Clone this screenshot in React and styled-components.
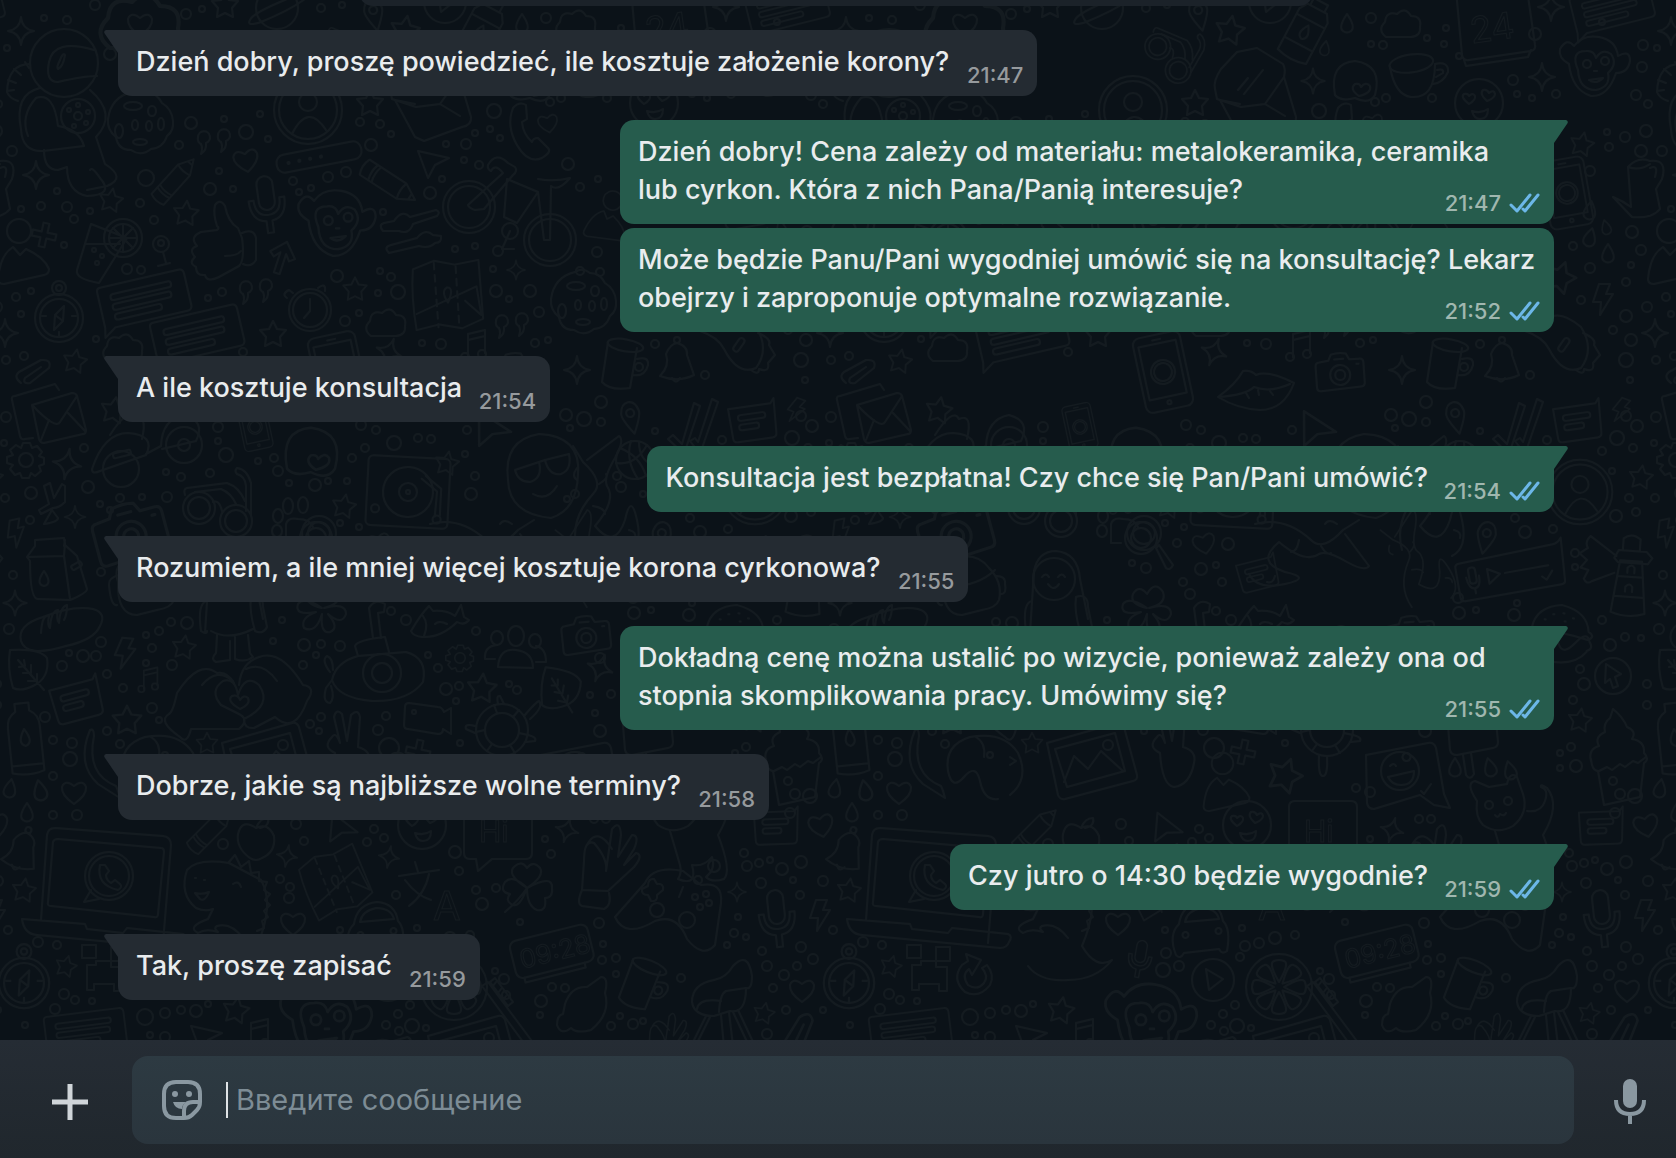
import React from 'react'
import styled, { createGlobalStyle } from 'styled-components';

const GlobalStyle = createGlobalStyle`
  * {
    box-sizing: border-box;
  }
  body {
    margin: 0;
    background: #0b1218;
    font-family: Inter, Roboto, "Liberation Sans", sans-serif;
  }
`

const Page = styled.div`
  display: flex;
  flex-direction: column;
  min-height: 100vh;
`

const Conversation = styled.main`
  position: relative;
  flex: 1;
  display: flex;
  flex-direction: column;
  justify-content: flex-end;
  padding: 0 122px 40px 118px;
  overflow: hidden;
`

const WallpaperSvg = styled.svg`
  position: absolute;
  inset: 0;
  width: 100%;
  height: 100%;
  fill: none;
  stroke: #141b20;
  stroke-width: 2;
  stroke-linecap: round;
  stroke-linejoin: round;

  text {
    stroke-width: 1;
  }
`

const Notice = styled.div`
  align-self: center;
  width: 954px;
  max-width: 100%;
  height: 30px;
  margin-top: -24px;
  border-radius: 14px;
  background: #1b2229;
  z-index: 1;
`

const Bubble = styled.div`
  position: relative;
  align-self: ${(props) => (props.$out ? 'flex-end' : 'flex-start')};
  max-width: 934px;
  margin-top: ${(props) => (props.$tail ? '24px' : '4px')};
  padding: 13px 16px 15px 18px;
  border-radius: 14px;
  border-top-left-radius: ${(props) => (props.$tail && !props.$out ? '0' : '14px')};
  border-top-right-radius: ${(props) => (props.$tail && props.$out ? '0' : '14px')};
  font-weight: 500;
  color: #e9ecee;
  background: ${(props) => (props.$out ? '#265c4d' : '#242b32')};
`

const Tail = styled.svg`
  position: absolute;
  top: 0;
  left: ${(props) => (props.$out ? '100%' : '-14px')};
  width: 14px;
  height: 24px;
  fill: ${(props) => (props.$out ? '#265c4d' : '#242b32')};
`

const Text = styled.span`
  font-size: 27px;
  line-height: 38px;
`

/* keeps room on the last line for the time and ticks */
const MetaSpace = styled.span`
  display: inline-block;
  width: ${(props) => (props.$out ? '110px' : '72px')};
  height: 1px;
`

const Meta = styled.span`
  position: absolute;
  right: 14px;
  bottom: 8px;
  display: flex;
  align-items: center;
  gap: 8px;
  font-size: 22px;
  line-height: 26px;
  color: ${(props) => (props.$out ? '#a0b7af' : '#969a9d')};
`

const TicksSvg = styled.svg`
  width: 31px;
  height: 20px;
  fill: none;
  stroke: #6cb7e8;
  stroke-width: 3;
  stroke-linecap: round;
  stroke-linejoin: round;
`

const Composer = styled.form`
  display: flex;
  align-items: center;
  padding: 16px 30px 14px 52px;
  background: linear-gradient(#252c34, #20272d);
  z-index: 1;
`

const IconButton = styled.button`
  display: flex;
  padding: 0;
  border: 0;
  background: none;
  color: ${(props) => (props.$light ? '#d0d5d9' : '#8a98a1')};
`

const SideButton = styled(IconButton)`
  padding-top: 4px;
`

const Field = styled.div`
  flex: 1;
  display: flex;
  align-items: center;
  height: 88px;
  margin: 0 40px 0 44px;
  padding: 0 30px;
  border-radius: 16px;
  background: linear-gradient(#2d3a42, #2a353d);
`

const Caret = styled.span`
  width: 2px;
  height: 36px;
  margin: 0 8px 0 24px;
  background: #dfe3e6;
`

const Input = styled.input`
  flex: 1;
  min-width: 0;
  padding: 0;
  border: 0;
  outline: 0;
  background: none;
  color: #e9ecee;
  font-family: inherit;
  font-size: 29px;
  line-height: 38px;

  &::placeholder {
    color: #7d8c95;
    opacity: 1;
  }
`

/* every doodle is drawn round its own centre */
const doodles = {
  star: <path d="M0-13l4 8 9 1-6 7 1 9-8-4-8 4 1-9-6-7 9-1z" />,
  sparkle: <path d="M0-14q1 12 13 14q-12 2-13 14q-1-12-13-14q12-2 13-14z" />,
  heart: <path d="M0 12Q-13 3-12-5Q-9-13 0-6Q9-13 12-5Q13 3 0 12z" />,
  drop: <path d="M0-9Q9 4 4 8Q0 11-4 8Q-9 4 0-9z" />,
  bolt: <path d="M-4-15H7L3-5h7L-3 16l1-13h-8z" />,
  cloud: <path d="M-15 13Q-24 6-16-2Q-15-13-4-10Q4-18 10-8Q21-8 19 3Q20 12 10 13z" />,
  plus: <path d="M-3-12h6v9h9v6H3v9h-6V3h-9v-6h9z" />,
  arrow: <path d="M-15-12L16-5 2 2-5 15z" />,
  up: <path d="M0-16L13-2 8 2 3-4V17h-6V-4l-5 6-5-4z" />,
  pin: <g><path d="M0 17Q-10 0-9-5Q-7-15 0-15Q7-15 9-5Q10 0 0 17z" /><circle cy="-4" r="4" /></g>,
  quotes: <path d="M-16-6a6 6 0 1 1 8 6q1 7-5 11q2-6 0-10q-4-2-3-7zM4-8a6 6 0 1 1 8 6q1 7-5 11q2-6 0-10q-4-2-3-7z" />,
  pencil: <g><path d="M-29-9H15L31 0 15 9h-44q-4-9 0-18zM15-9q-3 9 0 18M-19-9q-3 9 0 18M-15-9q-3 9 0 18M25-3v6" /></g>,
  mic: <g><rect x="-8" y="-27" width="16" height="34" rx="8" /><path d="M-18-4q0 20 15 22v12h6V18q15-2 15-22h-5q0 16-13 16T-13-4z" /></g>,
  bar: <g><rect x="-43" y="-9" width="86" height="18" rx="8" /><circle cx="-31" r="1" /><circle cx="-20" r="1" /><circle cx="-9" r="1" /><circle cx="2" r="1" /></g>,
  note: <g><path d="M-9 10V-13l17-4V6M-9-7L8-11" /><circle cx="-12" cy="10" r="4" /><circle cx="5" cy="7" r="4" /></g>,
  bubble: <g><path d="M-45-18q0-4 4-4h80q5 0 5 5v32q0 5-5 5h-74l-12 8 2-10z" /><rect x="-33" y="-13" width="62" height="6" rx="3" /><rect x="-33" y="-3" width="60" height="6" rx="3" /><rect x="-33" y="7" width="48" height="6" rx="3" /></g>,
  memo: <g><path d="M-24-18h45l4-5-2 36q0 5-5 5h-36q-5 0-5-5z" /><rect x="-15" y="-10" width="29" height="6" rx="3" /><rect x="-15" y="0" width="21" height="6" rx="3" /></g>,
  avatar: <g><circle r="34" /><circle r="29" /><circle cy="-8" r="9" /><path d="M-16 24Q0-8 18 20" /></g>,
  person: <g><circle cx="-5" cy="-24" r="12" /><path d="M-26 24Q-24 0-11-8l7 8 6-6Q20 2 25 14q0 5-5 6l-40 9q-6 0-6-5z" /></g>,
  compass: <g><circle r="24" /><circle r="19" /><circle cy="-30" r="7" /><circle cy="-30" r="3" /><path d="M5-12L4 3-5 12-4-3zM-4-3l8 6M-17-2h4M17-2h-4M0 18v-4" /></g>,
  clock: <g><circle r="21" /><circle r="17" /><path d="M0-11v12l-6 7M-23-12q-6-4 2-8l4 3M8-22q8-6 7 3" /></g>,
  map: <g><path d="M-37-27l22-9 22 4 25-5 5 62-22 10-24-4-24 6q-6-35-4-64zM-33 20L30-9l5 30-17-15" /><path strokeDasharray="7 6" d="M-15-34l5 68M8-30l4 64" /><path d="M0 8q-8-12-1-16q8 0 1 16z" /></g>,
  envelope: <g><path d="M-45-14q-4 0-3 4l8 36q1 4 5 3l8-1M-45-14l40-12 4 6" /><path d="M-28-5l40-12q4 0 5 3l9 34q0 4-3 4l-39 9q-4 0-5-4zM-28-5Q-4 20 0 12L17-14M-19 30L-11 10M25 21L8 3" /></g>,
  letter: <g><path d="M-40-5q-2-8 6-20L-18-42 2-46l26 16q3 5 1 13L10 10-14 13-38 5zM29-17l12 40q1 8-9 10l-38 14-9-4-20-37 20 4M10 10l20 12" /><path d="M-17-4L-7-16M-11 0L8-24" /></g>,
  planet: <g><circle r="21" /><path d="M-16 14q-15 5-11-2q2-6 30-18t29-13q7 2-7 12T-16 14z" /></g>,
  flask: <g><path d="M-11-24h22l5 8v46q-16 5-32 0v-46zM-16-10h32M-16 16h32M-8-24v-8H8v8" /><path d="M0-5q8 12 0 15q-8-3 0-15z" /></g>,
  bottle: <g><path d="M-7-35H7v8q9 5 9 16v45q-16 5-32 0v-45q0-11 9-16zM-16 27h32" /><path d="M0-9q9 14 0 17q-9-3 0-17z" /></g>,
  astronaut: (
    <g>
      <circle cx="0" cy="-61" r="34" />
      <path d="M30-74Q-10-86-15-62Q-19-42-6-42Q20-48 33-48M-4-64q-4 8-2 9q5-2 7-14q-2-3-5 5zM-34-60q-22 0-23 28q2 6 11 9M-50-34l-7 1M-48-41l-8-3M-43-49l-7-6M-35-56l-4-6" />
      <path d="M-24-36Q-50-30-43 5Q-42 28-21 27L20 22Q15 5-6 2Q-10-32-28-26Q-44-8-36 12M26-34Q54-10 32 13l9 27q22 14 2 22l-20 4M-20 26q0 20 14 20l9-3q0 25 20 29q28-1 13-18q-8-12-10-8" />
      <circle cx="14" cy="-8" r="17" /><circle cx="14" cy="-8" r="4" /><circle cx="5" cy="-14" r="2" /><circle cx="14" cy="-19" r="2" /><circle cx="24" cy="-12" r="2" /><circle cx="22" cy="-1" r="2" /><circle cx="10" cy="2" r="2" />
    </g>
  ),
  cookie: <g><path d="M-8-31q8-5 15 1q10 0 15 10q10 6 11 18q1 10-6 15q-4 12-16 13q-10 8-20 1q-13 0-15-13q-9-7-8-18q3-22 24-27z" /><ellipse cx="-7" cy="-17" rx="9" ry="4" /><ellipse cx="12" cy="-12" rx="4" ry="5" /><ellipse cx="-5" cy="2" rx="3" ry="5" /><ellipse cx="9" cy="3" rx="3" ry="5" /><ellipse cx="21" cy="1" rx="3" ry="6" /><ellipse cx="-21" cy="8" rx="4" ry="7" /><ellipse cy="19" rx="7" ry="3" /></g>,
  phone: <path d="M-17-23q-7 18 4 37t25 13q10-6 6-10L8 7Q3 7 2 11Q-7 3-8-9l5-3-1-14q-7-4-13 3z" />,
  bike: <g><circle cx="-41" cy="-16" r="26" /><circle cx="-41" cy="-16" r="21" /><circle cx="40" cy="17" r="26" /><circle cx="40" cy="17" r="21" /><path d="M-42-18L-7-50q-8-10-12-2q-4-2-3-6q8-14 20-2l7 4q3 4-2 8l-29 34-9 1q-6-2-7-5zM-3-44L28-31 7 0-6-6zM28-44q16 3 32-1q-12 14-19 8L40 17h-6L28-31" /><circle cy="8" r="8" /><path d="M0 8l-8 18h12" /></g>,
  monkey: <g><path d="M-25-4q-11-6-9-15q7-12 14-3Q-11-34 5-31Q22-28 24-12q12-7 12 5q-2 12-14 12Q14 29-3 28Q-22 22-25-4z" /><path d="M-16 2Q-24-17-8-17Q0-18 2-10Q8-20 17-14Q24-4 14 5Q17 19 2 22Q-15 22-16 2z" /><circle cx="-7" cy="-4" r="4" /><circle cx="11" cy="-7" r="4" /><path d="M0 3h3M-5 12q7 5 14-2z" /></g>,
  spoons: <path d="M-28-6q-5-6 1-8l10-2q8-12 16-4l26-7q5 2 1 6L2-13Q-2-2-12-6zM-22 16q-6-6 2-8L6 1q8-10 16-3l8 1q1 7-6 7Q18 12 8 9z" />,
  thumb: <path d="M-6-19q-4-12-2-21q5-7 10 1q3 16 13 22l4 10q3 22-3 28L-4 32q-12 6-14-2q-9 1-9-8q-8-4-1-10q-7-8 2-11q-8-9 4-14l16-2q3-2 0-4zM19-12q12-5 14 5v22q-5 8-13 4M2 11q12 0 16-5" />,
  drink: <g><circle cx="24" cy="-12" r="19" /><circle cx="24" cy="-12" r="14" /><path d="M24-26v28M10-12h28M14-22l20 20M34-22L14-2M-8-26l36 14L0 33q-24-4-22-13zM-13-6h34" /><circle cx="-5" cy="0" r="2" /><circle cx="3" cy="6" r="2" /><circle cx="-2" cy="13" r="2" /></g>,
  clip: <path d="M-13 10q-8-6-2-11L7-13q11-1 8 8L-4 10q-8 1-5-5L7-6" />,
  smart: <g><rect x="-24" y="-38" width="48" height="76" rx="7" /><path d="M-19-29h38v54h-38zM-4-33h8" /><circle r="12" /><circle r="9" /><circle cy="31" r="2" /></g>,
  lips: <path d="M-38 9Q-20-4-13-17Q-5-18 0-13Q12-18 38-5Q28 22 4 22Q-18 21-38 9q28-2 36-10q16 6 36-3M-10 5l3 5M2 2l1 5M14 3l3 4" />,
  camera: <g><path d="M-20-11l9-1 3-6q8-2 15 0l3 6h10q4 0 4 4v20q0 4-4 4l-40 2q-4 0-4-4v-21q0-4 4-4z" /><circle cy="3" r="10" /><circle cy="3" r="5" /><path d="M-5-13h9M17-7h2" /></g>,
  calendar: <g><path d="M-40-40l6 65q1 6 7 5l62-9q5-1 4-6l-9-63M-32 30l2 6 62-9 3-7" /><text x="-26" y="10" fontSize="36" transform="rotate(-8)">24</text></g>,
  cup: <g><ellipse cx="-2" cy="-12" rx="22" ry="9" transform="rotate(-8)" /><path d="M-25-8Q-20 20-4 22q24 2 24-33q14-3 13 8q-5 11-15 12M22-5q7-2 6 3l-7 4" /></g>,
  donut: <g><path d="M-20 13Q-26-19 0-21Q28-17 20 13q-6 10-20 3q-14 4-20-3z" /><path d="M4 14q-10-7-4-12q5-1 6 3q5-6 9-1q2 7-11 10z" /></g>,
  smile: <g><circle r="24" /><path d="M-10 1q-9-7-5-10q4-1 5 2q4-4 6 0q1 4-6 8zM8-2q-8-7-4-11q4-1 6 3q5-4 6 1q0 4-8 7zM-7 8q9 3 16-2q0 10-8 10q-6 0-8-8z" /></g>,
  jug: <path d="M-24 10Q-14 14-6 20l-3-40q10-11 22-6q18-2 12 18L19 2l4 20q-8 10-28 8zM-9-20q12 4 22-3M13-19q9-4 5 9" />,
  rocket: <g><path d="M-40-14Q-22-8-16 4Q-2 31 16 23Q30 4 16-18Q-5-36-18-26M18-12q14 6 11 12l6 10-7 8q2 10-9 6q0 7-8 1" /><rect x="-4" y="-7" width="6" height="15" rx="3" transform="rotate(35)" /></g>,
  mug: <g><ellipse cx="0" cy="-20" rx="18" ry="6" transform="rotate(10)" /><path d="M-14-23l-6 40q8 9 28 6l7-40M15-6q12-3 11 6q-3 12-15 10" /><circle cx="17" cy="2" r="4" /></g>,
  bell: <g><path d="M-17 12q10-10 6-22q4-10 11-11q11 3 10 12l7 20q-16 8-34 1z" /><path d="M-5 14q4 7 8 0" /><circle cy="-24" r="3" /></g>,
  gear: <g><path d="M-3-17h7l2 5 5-2 5 6-3 4 5 2v6l-5 2 2 5-6 5-4-3-2 5h-7l-2-5-5 2-5-6 3-4-6-2v-6l6-2-3-5 6-5 5 3z" /><circle r="7" /></g>,
  scooter: <g><path d="M-56 22Q-44-14-20-14Q8-12-2 8L-48 24q-8 4-8-2zM-38-12Q-20-40-14-28Q0-34-6-8M-2 7l15-8Q14-28 36-32Q58-26 48-6l-34 8" /><circle cx="-27" cy="22" r="18" /><circle cx="36" cy="-2" r="18" /><circle cx="36" cy="-2" r="6" /><rect x="-36" y="-2" width="18" height="5" rx="2" transform="rotate(-14)" /></g>,
  turntable: <g><rect x="-41" y="-35" width="82" height="70" rx="5" /><circle r="25" /><circle r="9" /><circle r="2" /><path d="M13-14l16 12-1 25M17-17l16 12v27" /><circle cx="30" cy="26" r="4" /><circle cx="-32" cy="18" r="4" /></g>,
  glasses: <g><circle cx="-22" cy="15" r="16" /><circle cx="-22" cy="15" r="11" /><circle cx="15" cy="28" r="16" /><circle cx="15" cy="28" r="11" /><path d="M-8 9q6-3 9 9M-36 2q-2-6 2-7l40-5q12 4 18 18M-26-1l26-3q10 4 15 15M30 22V-10Q26-24 16-25q-3 3 0 6q8 2 9 12v25" /></g>,
  paw: <g><ellipse cx="-8" cy="-22" rx="5" ry="8" /><ellipse cx="7" cy="-23" rx="5" ry="8" /><ellipse cx="-18" cy="-12" rx="5" ry="7" /><ellipse cx="-19" cy="3" rx="5" ry="6" /><path d="M-10 15V-4q2-7 12-5q12 0 15 8M-10 15h10" /><circle cx="20" cy="10" r="16" /><circle cx="20" cy="10" r="10" /></g>,
  carton: <g><path d="M-22-30l29-2 1 7 12 11 10 33q0 4-17 11l-32-1q-8 0-8-38l-3-4 8-11zM-30-13L7-14 8-27M7-14l6 43M8-30l-1 6" /><path d="M-13 1q9 13 0 15q-9-2 0-15z" /><rect x="14" y="-6" width="11" height="5" rx="2" transform="rotate(-30 18 -4)" /></g>,
  bread: <path d="M-40 14q-4-16 22-24q30-12 50-8q14 4 7 17q-6 14-34 20q-40 12-45-5zM-20 6q1-19 8-17q-2 9 1 12q1-17 8-18q-2 9 1 13q1-16 8-18q0 10-3 15" />,
  pack: <g><path d="M-25 2q-6-18 12-24q22-6 34 10q14 14 10 32q-3 8-17 10l-20 5q-20 0-19-33zM-24-5q-11 3-10 10q2 22 8 20M28-4q10 0 9 8q2 10-4 10" /><path d="M-24 6Q8 8 27-10" /></g>,
  leaf: <path d="M-18-20q30-2 37 8q3 20-14 28q-12 6-20 2q-6-20-3-38zM-10-10L16 20M-3-4l-1-6M-3-4l-6 1M3 3v-8M3 3h-8M9 11v-7M9 11H0" />,
  hands: <path d="M-5-14Q-12-26-22-24Q-40-38-62-4Q-66 15-70 17Q-82 24-59 40Q-52 48-48 32L0 32Q12 22-2 16L-18 8Q-30-6-16-16Q-4-20-1-2Q6-24 20-12Q34 8 5 22q0 10 10 9L36 20q20 18 32-16q10-14-4-16Q42-48 20-40Q2-34 0-12M-37-12Q-22-30-6-16M7-28Q24-36 38-16M1 12q-14-8-8-13q6-2 8 4q4-6 8-2q3 6-8 11z" />,
  flower: <path d="M0 0Q-18-4-14-14Q-8-24 0-14Q8-28 16-16Q20-4 2 0Q24-6 24 6Q20 18 6 6Q18 20 8 24Q-2 26 0 6Q-6 26-18 20Q-22 10-6 4Q-28 8-24-4Q-18-12 0 0z" />,
  sub: <g><path d="M-46 8Q-42-10-20-16L28-20Q50-14 45 10Q30 30-6 29Q-40 26-46 8zM-20-16l-3-10q2-6 30-9l4 15M-5-34l-4-30q6-10 16-4l-1 8-6 1 3 25M-46 8l-6 8q-4 14 4 15q5-5 1-17M-48 0q-9-12-3-16q6 2 6 14" /><circle cx="4" cy="1" r="19" /><circle cx="4" cy="1" r="10" /></g>,
  fish: <path d="M-30 9Q-20-8-12-16L-8-11Q6-12 14-6l6-11 3 12 5 3q-5 6-12 2Q0 16-19 15Q-28 14-30 9zM-18-6q6 8 1 20M-6 2q4-4 12 0" />,
  people: <g><ellipse cy="-14" rx="8" ry="10" /><ellipse cx="-19" cy="-12" rx="6" ry="7" /><ellipse cx="19" cy="-9" rx="6" ry="7" /><path d="M-18 17Q-17-2 0 0Q17 2 17 18zM-21 9h-10q-1-13 12-14M20 12h10q0-14-10-16" /></g>,
  video: <g><path d="M-20-14q-4 0-4 4l-1 18q0 4 4 4l30 5q5 0 5-5l8 5V-9l-7 4q-2-5-6-5z" /><circle cx="-15" cy="-5" r="2" /></g>,
  turtle: <g><circle r="26" /><circle r="17" /><path d="M-5-17l-3-8M11-13l6-7M17 3l9 2M8 15l5 8M-10 14l-5 7M-17 0l-9 2M22-14q12-14 15-15q5 6-9 18M-27-4q-11-3-9 3l9 4M26 5q9 2 7 6l-9 1M-4-26q-2-9 2-8l4 8M-8 26q-1 20 4 20t4-20" /></g>,
  peace: <path d="M-13 8Q-26 2-16-8Q-12-14-8-2L-14-28q2-9 8-3L-1-4 3-30q7-7 9 2L10 2q14 4 11 16q-4 22-20 24q-12-2-14-34z" />,
  picture: <g><path d="M-42-14L28-34q5-1 7 4L48 18q1 5-4 6L-24 42q-5 1-7-4z" /><path d="M-34-8l60-16 10 38-58 16zM-25 25l10-26 14 13L12-6l22 20" /><circle cx="19" cy="-12" r="5" /></g>,
  moon: <path d="M-6-30q-14 34 8 54l22 14q-2-8-4-12Q-10 14-2-24q0-8-4-6z" />,
  dog: <g><path d="M-34 14Q-38-12-12-20Q22-26 36-4Q48 22 28 38M-34 14q4 20 16 6t16 4q4 20 18 18" /><circle cx="8" cy="-2" r="3" /><path d="M28 0l6 4-6 4M-6-20q10 6 8 20" /></g>,
  helmet: <g><path d="M-35 10Q-40-30-4-36Q38-34 35 4Q34 40 8 48Q-34 44-35 10z" /><path d="M-28 0l24-8q4 16-9 20q-12 0-15-12zM2-10L26-16q3 16-8 20q-12 2-16-14M-4-8l6-2M-10 24q14 8 24-8" /></g>,
  check: <path d="M-26 12l5-4 9 9L0-24l6 3L-10 27zM-4 14l5-3 3 4L18-28l6 3L6 27z" />,
  ball: <g><circle r="19" /><path d="M-15-12Q5-4 11 16M-19 3Q0 6 12-15M-4-19Q-10 0 3 19M4-18Q4 0 18 5" /></g>,
  snake: <path d="M-26 60Q-34 30-10 4Q2-8-20-28L-30-44M-16-30L16-54q6 4-4 22Q0-12 4-4Q14 10-8 36Q12 60 22 30Q28 2 34 30Q40 58 24 66M-4-6q10-6 7-10M-10 16q12 2 12 8M-26-22q-6 8 0 12M26 40q8 2 6 8" />,
  kid: <g><path d="M-24 46L-20-16Q-16-36 2-36Q24-34 26-8l8 40M-22 14q-10 2-6 30q6 4 6 0M22 10q12-4 12 10l4 20q-4 8-12 4q-6-20-4-34M-18 44Q0 54 24 42M-12 48l-1 18q-6 6 0 9l14-2V54M6 50v22q10 4 18-2l-3-4-2-18" /><circle cy="-8" r="21" /><path d="M-12-10q4-5 7 0M4-10q4-5 7 0M-6-3q6 8 11 0" /></g>,
  voice: <g><path d="M-53-14q0-4 4-4l96-3q5 0 9-5l-3 42q0 4-4 4h-98q-4 0-4-4z" /><rect x="-41" y="-12" width="7" height="16" rx="3" /><path d="M-44-3q1 12 7 12t6-12M-37 9v5M-22-8l12 7-12 8zM-5-1h44M31 9l4 4 7-8" /></g>,
  lighthouse: <g><path d="M-18 36L-12-16h22L16 36q-18 6-34 0zM-18-18l4-8h28l6 6-4 6h-30zM-10-26v-12q8-7 17 0v12M-14 0h26M-16 20h30M-16-20L-43-38q-6 6-2 12l-8 6 8 6-6 8 8 2-4 9q3 6 8 2l22-10" /><path d="M-4-4v-5q4-5 7 0v5M-5 15v-5q4-5 7 0v5" /></g>,
  burger: <path d="M-28 4Q-26-18 0-22Q26-18 29 2q8 4 0 8Q0 3-28 8zM-28 12q4 8 14 2t15 4 16-4 14-2q5 6-2 9M-26 20Q-26 32-10 35Q18 38 29 22M-16-6h1M-8-12h1M2-14h1M4-6h1M12-10h1" />,
  cursor: <g><circle r="18" /><path d="M-7-12L8-2 2 1l3 9-5 2-3-9-5 4z" /></g>,
  cupcake: <path d="M-28 14q-3-12 8-15q-5-9 6-14q-2-9 5-14L-6-38Q4-30 8-20q10 4 5 12q13 2 12 14q6 6 0 10l-4 34-36 8-6-34q-6 0-7-12zM-20 24l8-4 5 3 8-6 5 3 8-6 5 2 8-6" />,
  popsicle: <path d="M-25-34L16-40q6 0 7 5l4 42q0 5-5 6l-36 7q-6 0-7-5zM-8 20l3 20q4 6 8-1L0 18M-18-14q10 6 18-4t20 0" />,
  face: <g><path d="M-38-30L24-42q6-1 8 5l8 46 6 14-16-3-14-10-46 14q-6 0-7-6z" /><circle cx="-4" cy="-14" r="19" /><path d="M-14-19q4-4 6 0M2-24a4 4 0 1 1 1 0M-16-8L10-14Q10 0-3 0Q-12 0-16-8M17 6l3 3 7-10" /></g>,
  lens: <g><circle cx="-5" cy="-9" r="17" /><circle cx="-5" cy="-9" r="11" /><path d="M7 6l3-3 14 20q-3 6-7 3z" /></g>,
  laptop: <g><path d="M-60-62L48-54q8 1 8 9l-8 98M-60-62q-7 0-8 7l-6 85M-57-51L46-42q3 0 3 4l-6 62q0 4-4 3L-64 16q-4 0-3-4l5-60q1-3 5-3zM-93 29L-30 34l2 5 36 4 4-5 56 6q5 2 1 8q-2 6-9 6L-78 45q-13-1-15-16z" /><circle cx="-6" cy="-14" r="24" /><circle cx="-6" cy="-14" r="20" /><path d="M-24 0l-7 12 15-3M-15-25q-4 20 18 25q5-3 2-6l-5-4-4 3q-5-3-5-8l3-4-4-6z" /></g>,
  apple: <path d="M0-10Q-14-20-18-4Q-20 10-6 20Q0 24 6 20Q20 14 18-2Q12-16 0-10zM0-10Q4-20 12-20Q14-12 4-10" />,
  dino: <g><path d="M18 38q-12-16-26-12q-4 2 1 6q-12-4-20 1q-12-6 10-14l5-10q-8 3-17-1Q-46-6-38-30Q-28-42 4-37L36-20Q50 4 32 46q14 24 30 14q-16 20-44 20Q-10 82-22 66" /><path d="M4-38l6-7 6 12 8-6 2 12 8-1 0 9 8 1-3 8 6 4-5 6 5 5-6 6 4 6-6 4 2 7-7 3M-30-22h1M-21-20h1M8-16q6-4 8 3M-30-7q7 2 14-1q-4 10-9 7z" /></g>,
  hi: <g><path d="M-28-37h56q6 0 6 6v46q0 6-6 6H-6l-14 12-2-12h-6q-6 0-6-6v-46q0-6 6-6z" /><text x="-19" y="4" fontSize="30">Hi</text></g>,
  clover: <path d="M0 0Q-22-14-12-22Q-5-28 0-20Q6-28 13-20Q18-12 0 0Q26-14 25 0Q26 10 18 10Q20 24 10 22Q0 18 0 0Q-8 22-16 16Q-22 12-17 6Q-28 4-22-6Q-14-14 0 0Q-8 12-22 24" />,
  lang: <g><path d="M-26-12L14-18M-10-26l3 10M4-14Q0 6-16 18M-20-8Q-8 8 6 12" /><text x="8" y="32" fontSize="40">A</text></g>,
  car: <path d="M-23-6Q-20-26 0-28Q18-27 21-9q8 8 4 30q-5 4-8-2l-35 4q-4 7-8 2q-8-20 3-31zM-17-8L17-11Q14-22-1-22Q-15-19-17-8zM-16 2a3 3 0 1 1-1 0M17-2a3 3 0 1 1-1 0" />,
  creeper: <path d="M-16-22h14v13h-14zM13-20h14v14H13zM-2-6h15v6h11v24h-8v-7H-4v6h-7V-2h9z" />,
  redo: <path d="M-13-12Q-24 2-10 15Q4 22 15 8Q20-2 12-12l-5 3q7 8 2 15Q2 14-7 8Q-14-2-6-8l3 6L6-17-9-23l2 7z" />,
  play: <g><circle r="21" /><path d="M-7-11L10-1-4 10z" /></g>,
  lime: <g><circle r="33" />{[0, 45, 90, 135, 180, 225, 270, 315].map((a) => <path key={a} transform={`rotate(${a})`} d="M0-5Q-11-24-5-26Q0-28 5-26Q11-24 0-5z" />)}</g>,
  digital: <g><rect x="-41" y="-20" width="80" height="38" rx="7" /><path d="M-34 18v5h62v-5" /><text x="-34" y="9" fontSize="26">09:28</text></g>,
  brush: <path d="M-36-34l6-4L28 40l-6 5zM-28-38l5-4 18 24-5 4zM-22-38l-3 4M-17-31l-3 4M-12-24l-3 4" />,
  kettle: <path d="M-18-4Q-12-22 4-21l14-10q8 0 4 16Q28 6 8 22Q-6 26-12 20q-10 8-14-3q0-10 6-11z" />,
  gamepad: <g><path d="M-26-32Q-18-50 12-44l18 14q22-4 20 18L44 30q-12 14-28-6Q6-2-16 6Q-46 24-56 2zM-23-29q0-8 6-7l3 5q7-1 6 6l-6 5q1 7-6 6l-3-6q-7 0-6-6z" /><circle cx="-14" cy="-5" r="7" /><circle cx="16" cy="5" r="8" /><circle cx="24" cy="-18" r="3" /><circle cx="35" cy="-21" r="3" /><circle cx="29" cy="-8" r="3" /><circle cx="38" cy="-12" r="3" /><path d="M8-18l4-10" /></g>,
  chair: <path d="M-32 2Q-32-16-10-20Q2-22 9-34Q24-50 28-24Q28-10 22-12Q22 14 6 11L-10 16Q-30 16-32 2zM22-12L2-9Q-4-6-5 12M-27 9q2-11 24-8M-18 16l-14 28M-14 17l-14 28M-3 15l3 32M5 12l4 34M14 10l16 34M9 12l16 34" />,
  tulip: <path d="M-22-2Q-22-24-12-20Q2-4 0 8L6-34q8-10 9 6L12-6 26-28q8 0 2 14L18 2l12-12q8 2-2 14L2 28-24 27zM-24 27q-6 14 0 16l22 3q8-4 5-16M-18-20Q-8-36 6-14" />,
  cat: <g><path d="M-24-12q-12-18-2-20l14 6 18-3q3-13 10-7l6 17Q28 0 12 13Q-4 22-18 12q-8-8-6-24zM26-2q14 2 18-10t-4-14q-1-4 6 1Q60-8 42 22q14 36 6 44q-12 4-18-2q10-8 6-20q-8 10-20 8q6 22-14 14q4-6 2-14L-6 18" /><circle cx="-12" cy="-8" r="4" /><circle cx="7" cy="-12" r="4" /><path d="M-6 2q3 4 5-1q4 3 6-1" /></g>,
  bulb: <g><circle cy="-6" r="8" /><circle cy="-7" r="3" /><path d="M2 2l3 11M-3 16l12-3" /></g>,
  pinwheel: <path d="M-8-16l6-3 4 15 8-14 3 2v16q-6 6-12 6l-12 6-2-4 10-6zM-8 22l8-14 6 8q0 4-14 6z" />,
}

// tile of the wallpaper: [doodle, x, y, rotation, scale]
const placed = [
  ['sparkle', 21, 31], ['cloud', 140, 22, 0, 2], ['heart', 140, 24], ['star', 225, 5], ['planet', 277, 8], ['pin', 374, 14, -12], ['play', 445, 2],
  ['flask', 481, 30, 28], ['drop', 522, 23], ['star', 405, 30, 10, 1.1], ['glasses', 354, 45, 30, 0.8], ['cloud', 576, 24], ['calendar', 671, 30], ['sparkle', 726, 7], ['bubble', 788, 8, -14, 0.9],
  ['astronaut', 64, 124], ['cookie', 140, 123], ['avatar', 308, 110], ['star', 370, 103], ['letter', 430, 94], ['sparkle', 488, 81, 0, 0.9], ['donut', 530, 82], ['cup', 590, 75],
  ['drop', 500, 48, 10, 0.8], ['sparkle', 717, 77], ['smile', 654, 103], ['monkey', 769, 68], ['phone', 530, 131], ['heart', 548, 123, -10, 0.8], ['quotes', 214, 143], ['pencil', 175, 180, -48, 0.9],
  ['heart', 246, 160, -10], ['bar', 319, 157, -11], ['pencil', 389, 183, 33, 1], ['arrow', 433, 163], ['bike', 510, 223], ['sparkle', 36, 175], ['star', 111, 200, 10, 0.9], ['star', 186, 213, 5, 0.95],
  ['mic', 267, 203, -8], ['monkey', 336, 225, 0, 1.1], ['spoons', 411, 237], ['thumb', 223, 245], ['up', 282, 257, 18], ['drink', 99, 250], ['person', 24, 255], ['plus', 44, 235, 12], ['bulb', 161, 250],
  ['compass', 59, 318], ['bubble', 145, 300, -13], ['bubble', 198, 335, -13], ['star', 273, 334], ['clock', 310, 310], ['quotes', 256, 293], ['star', 355, 289, 0, 0.9], ['cloud', 386, 323],
  ['map', 448, 295, 0, 0.95], ['sparkle', 516, 270, 0, 0.7], ['quotes', 512, 327], ['sparkle', 5, 333], ['cloud', 123, 348], ['star', 75, 361, 10, 0.9], ['clip', 34, 373], ['note', 477, 347], ['sparkle', 389, 352, 20],
  ['star', 757, 144, 12, 0.9], ['jug', 812, 187], ['smart', 742, 193, -10, 0.9], ['drop', 765, 210, 10], ['drop', 781, 227, -15, 0.8], ['drop', 765, 237, 15], ['drop', 783, 253], ['star', 735, 277, 20, 1.2],
  ['bolt', 778, 299], ['rocket', 740, 345], ['person', 610, 220, 20, 0.8], ['cookie', 583, 303], ['mug', 622, 365], ['bell', 677, 364],
  ['smart', 338, 372, -12], ['lips', 431, 388], ['camera', 515, 372, -4], ['sparkle', 577, 370], ['envelope', 60, 410], ['star', 114, 410, 10], ['gear', 26, 460], ['sparkle', 67, 464, 10, 1.1],
  ['scooter', 148, 447], ['smart', 255, 427, -12, 0.6], ['donut', 311, 453, 0, 1.2], ['turntable', 408, 492, 3], ['star', 447, 463, 10, 0.9], ['glasses', 221, 493], ['paw', 296, 528], ['star', 344, 506, 10, 0.9],
  ['helmet', 543, 470], ['arrow', 491, 431, 20, 1.2], ['pinwheel', 52, 502], ['sparkle', 75, 517, 0, 0.8], ['bolt', 16, 533, -12, 0.9], ['camera', 130, 532, -15, 1.5], ['carton', 57, 570], ['sparkle', 15, 603, 0, 0.9],
  ['pin', 631, 417, -12], ['check', 694, 427], ['memo', 753, 423, -8, 0.95], ['bolt', 796, 410, 20, 0.8], ['ball', 635, 460], ['snake', 603, 490], ['avatar', 755, 492, 0, 0.95], ['star', 816, 477, 8, 0.9],
  ['pin', 661, 537, 12], ['lens', 324, 542], ['heart', 379, 543, -12, 0.9], ['memo', 433, 575, -14, 0.8], ['voice', 685, 573, -10], ['lighthouse', 806, 577, 4], ['snake', 490, 550, 90], ['snake', 590, 555, -20, 0.8],
  ['bread', 61, 627], ['pack', 143, 580], ['kid', 229, 587], ['flower', 322, 608], ['fish', 441, 622], ['camera', 586, 635, -6], ['burger', 735, 627, 6], ['leaf', 28, 670], ['memo', 77, 702, -15, 1],
  ['bolt', 125, 653, 5], ['star', 184, 647, 8, 0.9], ['note', 151, 681, 0, 0.8], ['hands', 239, 697], ['sub', 378, 672], ['gear', 460, 658, 0, 0.75], ['people', 516, 650], ['star', 482, 688, 5, 1.1],
  ['sparkle', 600, 668, 20], ['cursor', 788, 676], ['leaf', 560, 690, 10], ['bottle', 25, 738, -6], ['star', 127, 720, 0, 1.1], ['moon', 96, 760], ['dog', 157, 757], ['picture', 264, 757], ['peace', 348, 745],
  ['video', 429, 717], ['turtle', 502, 730], ['plus', 418, 752, 12], ['star', 207, 743, 0, 0.8], ['popsicle', 646, 735], ['star', 755, 720, 8, 0.9], ['cupcake', 794, 747], ['star', 460, 775, 20, 1.3],
  ['drop', 630, 767], ['drop', 665, 767, -15], ['drop', 685, 770, -15], ['face', 579, 785], ['person', 402, 785, 0, 0.9], ['drop', 10, 788, 10], ['drop', 40, 790, -12, 1.1], ['drop', 27, 812], ['heart', 74, 792],
  ['bell', 21, 853, 18], ['laptop', 115, 890], ['star', 24, 890, 8, 0.9], ['pencil', 211, 830, -45, 0.9], ['apple', 256, 838], ['dino', 225, 900], ['map', 336, 882, -18, 0.85], ['sparkle', 287, 856, 10, 0.8],
  ['sparkle', 389, 857, 10, 0.8], ['smile', 422, 825], ['hi', 498, 838], ['clover', 527, 888], ['lang', 425, 888], ['car', 377, 930], ['heart', 293, 923], ['arrow', 341, 830, 25],
  ['cat', 676, 813], ['memo', 776, 828, -2, 0.9], ['heart', 821, 825, -12], ['sparkle', 567, 830, 15, 0.9], ['tulip', 606, 863], ['gamepad', 671, 915], ['sparkle', 737, 892, 0, 0.7], ['mic', 777, 917, -6], ['bolt', 820, 915],
  ['compass', 24, 983, 0, 1.05], ['star', 66, 966, 15, 0.8], ['creeper', 98, 967], ['redo', 150, 977], ['mic', 315, 958, 10, 0.65], ['play', 388, 980], ['lime', 454, 987], ['digital', 553, 952, -14],
  ['brush', 518, 1020], ['kettle', 583, 1008], ['mug', 642, 985, 12], ['chair', 724, 1000], ['heart', 802, 990], ['star', 764, 1013, 12, 0.8], ['bubble', 86, 1032, -7, 0.9], ['star', 236, 1010, 10],
  ['note', 260, 1036], ['arrow', 206, 1038], ['monkey', 325, 1025, 0, 1.3], ['kettle', 380, 1060, 20], ['picture', 470, 1050], ['tulip', 665, 1040, 0, 0.7], ['clip', 800, 1035, -30, 1.2],
]

// small rings between the doodles: [x, y, r]
const rings = [
  [44, 18, 3], [67, 20, 4], [95, 5, 5], [186, 14, 5], [321, 8, 4], [342, 5, 3], [202, 9, 3], [7, 48, 3], [110, 54, 6], [12, 151, 5], [191, 123, 6], [224, 119, 3], [246, 132, 7], [260, 114, 3], [268, 139, 3],
  [179, 145, 4], [146, 178, 8], [210, 189, 6], [233, 189, 3], [219, 171, 3], [371, 145, 6], [360, 122, 4], [380, 124, 4], [391, 134, 3], [494, 111, 7], [490, 129, 3], [475, 133, 3], [500, 138, 3], [466, 144, 5],
  [446, 144, 3], [479, 165, 4], [464, 160, 3], [442, 179, 3], [430, 193, 6], [328, 177, 5], [346, 172, 5], [293, 181, 4], [299, 192, 3], [311, 188, 3], [383, 212, 3], [57, 191, 3], [41, 206, 4], [21, 209, 3],
  [67, 207, 5], [74, 219, 4], [90, 211, 3], [140, 203, 4], [154, 220, 4], [64, 245, 3], [127, 269, 5], [141, 270, 4], [16, 297, 4], [31, 291, 3], [21, 314, 3], [96, 339, 3], [24, 356, 4], [6, 360, 4], [208, 298, 3],
  [222, 292, 4], [337, 276, 6], [391, 277, 4], [380, 271, 3], [378, 293, 3], [398, 292, 7], [345, 321, 5], [359, 313, 3], [455, 249, 3], [475, 246, 3], [498, 251, 5], [493, 269, 3], [496, 291, 6], [530, 291, 6],
  [509, 299, 3], [539, 312, 5], [535, 343, 4], [422, 343, 3], [441, 344, 5], [243, 352, 4], [546, 18, 5], [550, 102, 4], [558, 45, 4], [546, 44, 3], [602, 38, 3], [621, 28, 3], [619, 44, 3], [634, 56, 3],
  [607, 98, 4], [561, 98, 4], [710, 34, 6], [777, 22, 3], [688, 80, 5], [692, 94, 3], [707, 98, 3], [731, 94, 4], [818, 45, 5], [817, 67, 5], [811, 95, 5], [823, 104, 4], [782, 132, 3], [800, 137, 5],
  [821, 131, 6], [784, 147, 4], [816, 151, 6], [765, 171, 5], [807, 232, 6], [816, 250, 5], [765, 268, 5], [748, 246, 4], [806, 265, 3], [801, 282, 4], [756, 300, 4], [801, 316, 6], [822, 307, 5], [788, 330, 4],
  [806, 340, 6], [801, 360, 7], [568, 164, 6], [580, 187, 4], [598, 179, 3], [597, 252, 5], [580, 271, 4], [600, 272, 4], [655, 344, 4], [705, 375, 4], [805, 380, 3], [548, 340, 3],
  [6, 417, 5], [84, 448, 4], [4, 443, 3], [31, 493, 6], [88, 487, 6], [5, 498, 4], [166, 472, 3], [181, 477, 4], [120, 498, 4], [100, 504, 3], [142, 497, 3], [167, 497, 5], [110, 510, 3], [30, 520, 4], [218, 427, 5],
  [218, 441, 3], [226, 455, 7], [210, 473, 4], [258, 461, 3], [274, 458, 4], [278, 471, 5], [289, 483, 3], [315, 485, 6], [328, 481, 3], [347, 481, 3], [352, 458, 4], [365, 448, 4], [394, 443, 7], [418, 438, 4],
  [431, 439, 4], [361, 425, 5], [376, 430, 4], [467, 430, 4], [465, 454, 3], [475, 476, 4], [471, 494, 6], [359, 527, 3], [13, 575, 4], [101, 572, 4], [9, 629, 5], [171, 622, 4], [187, 623, 6], [159, 631, 4],
  [146, 635, 3], [101, 642, 5], [152, 648, 4], [83, 656, 6], [96, 656, 5], [62, 666, 5], [69, 653, 3], [146, 663, 3], [172, 665, 5], [107, 674, 4], [123, 688, 4], [152, 708, 5], [45, 717, 5], [159, 720, 3],
  [107, 731, 4], [53, 740, 4], [72, 743, 5], [70, 759, 7], [120, 744, 4], [282, 620, 3], [273, 641, 3], [304, 645, 6], [321, 644, 4], [340, 646, 5], [316, 655, 3], [303, 665, 4], [391, 611, 4],
  [406, 620, 5], [428, 655, 3], [438, 668, 4], [476, 631, 4], [446, 689, 6], [459, 686, 4], [456, 701, 3], [509, 684, 3], [517, 690, 4], [310, 724, 4], [319, 731, 3], [321, 717, 4], [378, 730, 5], [386, 716, 4],
  [389, 748, 10], [460, 743, 3], [566, 415, 6], [601, 402, 6], [584, 419, 7], [601, 422, 4], [570, 428, 3], [655, 431, 3], [722, 440, 4], [792, 438, 7], [812, 426, 6], [808, 448, 4], [777, 451, 4], [801, 416, 5],
  [617, 476, 4], [621, 487, 5], [643, 494, 3], [567, 499, 3], [575, 494, 4], [700, 532, 6], [728, 529, 4], [690, 518, 4], [750, 553, 4], [750, 567, 3], [791, 516, 6], [811, 512, 4], [787, 471, 3], [804, 498, 4],
  [340, 523, 3], [352, 543, 4], [376, 569, 6], [391, 565, 3], [397, 582, 4], [403, 544, 6], [365, 594, 5], [358, 582, 4], [307, 563, 3], [321, 568, 5], [633, 598, 5], [634, 613, 6],
  [689, 615, 6], [651, 610, 3], [692, 603, 3], [777, 620, 4], [785, 645, 6], [800, 637, 4], [816, 638, 3], [755, 669, 4], [759, 684, 6], [748, 700, 4], [822, 684, 4], [822, 705, 4], [590, 695, 3], [611, 694, 4],
  [595, 713, 3], [600, 731, 6], [746, 747, 4], [735, 753, 3], [735, 768, 3], [751, 766, 6], [600, 658, 5], [627, 694, 4], [53, 776, 4], [53, 815, 4], [77, 815, 5], [8, 930, 4], [38, 942, 5], [57, 945, 4],
  [223, 844, 5], [296, 824, 5], [304, 841, 4], [367, 842, 4], [374, 829, 4], [384, 838, 4], [280, 879, 4], [290, 887, 4], [289, 898, 5], [396, 895, 4], [455, 852, 6], [459, 871, 4], [476, 890, 4], [496, 888, 4],
  [482, 904, 6], [545, 839, 3], [551, 854, 4], [520, 922, 3], [417, 928, 3], [340, 930, 3], [540, 1015, 3], [495, 971, 3], [504, 979, 5], [506, 995, 4], [541, 1001, 6], [64, 994, 5], [75, 1000, 4], [92, 1001, 3],
  [55, 1009, 5], [25, 1025, 3], [145, 1017, 8], [165, 1013, 5], [181, 1010, 4], [196, 1011, 6], [208, 1004, 3], [150, 1035, 3], [165, 1037, 5], [386, 1025, 4], [412, 1026, 7], [399, 1031, 4], [426, 1028, 3],
  [410, 1005, 4], [398, 1014, 4], [341, 953, 5], [338, 970, 7], [354, 966, 5], [420, 946, 5], [434, 943, 5], [450, 938, 6], [470, 935, 4], [415, 957, 4], [594, 819, 4], [606, 819, 4], [545, 792, 5], [531, 788, 4],
  [714, 866, 6], [698, 880, 4], [744, 853, 4], [747, 866, 5], [759, 863, 4], [770, 860, 3], [782, 869, 6], [801, 862, 6], [761, 883, 5], [793, 880, 3], [823, 881, 5], [800, 895, 4], [738, 917, 3], [734, 933, 4],
  [746, 937, 3], [727, 945, 3], [762, 951, 4], [801, 947, 5], [813, 959, 5], [797, 966, 4], [767, 966, 5], [784, 975, 5], [773, 988, 4], [786, 1010, 4], [823, 1010, 3], [767, 1034, 5], [681, 978, 4], [599, 923, 5],
  [603, 944, 3], [602, 960, 4], [616, 958, 4], [616, 974, 3], [565, 988, 4], [552, 987, 4], [620, 1016, 3], [633, 1024, 5], [643, 1021, 3], [611, 1026, 4], [795, 794, 5], [790, 813, 5], [810, 796, 7], [788, 781, 4],
]

const chat = [
  { text: 'Dzień dobry, proszę powiedzieć, ile kosztuje założenie korony?', time: '21:47', tail: true },
  { out: true, text: 'Dzień dobry! Cena zależy od materiału: metalokeramika, ceramika lub\u00a0cyrkon. Która z nich Pana/Panią interesuje?', time: '21:47', tail: true },
  { out: true, text: 'Może będzie Panu/Pani wygodniej umówić się na konsultację? Lekarz obejrzy i zaproponuje optymalne rozwiązanie.', time: '21:52' },
  { text: 'A ile kosztuje konsultacja', time: '21:54', tail: true },
  { out: true, text: 'Konsultacja jest bezpłatna! Czy chce się Pan/Pani umówić?', time: '21:54', tail: true },
  { text: 'Rozumiem, a ile mniej więcej kosztuje korona cyrkonowa?', time: '21:55', tail: true },
  { out: true, text: 'Dokładną cenę można ustalić po wizycie, ponieważ zależy ona od stopnia skomplikowania pracy. Umówimy się?', time: '21:55', tail: true },
  { text: 'Dobrze, jakie są najbliższe wolne terminy?', time: '21:58', tail: true },
  { out: true, text: 'Czy jutro o 14:30 będzie wygodnie?', time: '21:59', tail: true },
  { text: 'Tak, proszę zapisać', time: '21:59', tail: true },
]

function Wallpaper() {
  return (
    <WallpaperSvg aria-hidden="true">
      <defs>
        <pattern id="doodles" width="825" height="1080" patternUnits="userSpaceOnUse">
          {/* drawn again on either side so that nothing is cut at the seam */}
          {[-825, 0, 825].map((shift) => (
            <g key={shift} transform={`translate(${shift} 0)`}>
              {placed.map(([name, x, y, turn = 0, scale = 1], i) => (
                <g key={i} transform={`translate(${x} ${y}) rotate(${turn}) scale(${scale})`}>{doodles[name]}</g>
              ))}
              {rings.map(([x, y, r], i) => <circle key={i} cx={x} cy={y} r={r} />)}
            </g>
          ))}
        </pattern>
      </defs>
      <rect width="100%" height="100%" fill="url(#doodles)" stroke="none" />
    </WallpaperSvg>
  );
}

function Ticks() {
  return (
    <TicksSvg viewBox="0 0 31 20" role="img" aria-label="Прочитано">
      <path d="M2 12l6 6L21 2M14 16l2 2L29 2" />
    </TicksSvg>
  );
}

function Message({ out, text, time, tail }) {
  return (
    <Bubble $out={out} $tail={tail}>
      {tail && (
        <Tail $out={out} viewBox="0 0 14 24" aria-hidden="true">
          <path d={out ? 'M0 0H12Q15 1 13 4L0 23z' : 'M14 0H2Q-1 1 1 4L14 23z'} />
        </Tail>
      )}
      <Text>{text}</Text>
      <MetaSpace $out={out} />
      <Meta $out={out}>
        <time>{time}</time>
        {out && <Ticks />}
      </Meta>
    </Bubble>
  );
}

export default function App() {
  return (
    <Page>
      <GlobalStyle />
      <Conversation>
        <Wallpaper />
        <Notice />
        {chat.map((message) => <Message key={message.text} {...message} />)}
      </Conversation>
      <Composer>
        <SideButton type="button" $light aria-label="Прикрепить">
          <svg width="36" height="36" viewBox="0 0 36 36" fill="none" stroke="currentColor" strokeWidth="5">
            <path d="M18 0v36M0 18h36" />
          </svg>
        </SideButton>
        <Field>
          <IconButton type="button" aria-label="Стикеры">
            <svg width="40" height="40" viewBox="0 0 40 40" fill="none" stroke="currentColor" strokeWidth="4" strokeLinejoin="round">
              <path d="M38 22V14Q38 2 26 2H14Q2 2 2 14V26Q2 38 14 38H22Q27 38 30 35L35 30Q38 27 38 22z" />
              <path d="M22 37V31Q22 22 31 22H38" />
              <circle cx="13" cy="14" r="3" fill="currentColor" stroke="none" />
              <circle cx="27" cy="14" r="3" fill="currentColor" stroke="none" />
              <path d="M11 22H24Q20 25 20 29Q13 29 11 22z" fill="currentColor" stroke="none" />
            </svg>
          </IconButton>
          <Caret />
          <Input aria-label="Сообщение" placeholder="Введите сообщение" />
        </Field>
        <SideButton type="button" aria-label="Голосовое сообщение">
          <svg width="32" height="46" viewBox="0 0 32 46" fill="none" stroke="currentColor" strokeWidth="4">
            <rect x="9" y="0" width="14" height="29" rx="7" fill="currentColor" stroke="none" />
            <path d="M2 21Q2 35 16 35Q30 35 30 21M16 35V45" />
          </svg>
        </SideButton>
      </Composer>
    </Page>
  );
}
